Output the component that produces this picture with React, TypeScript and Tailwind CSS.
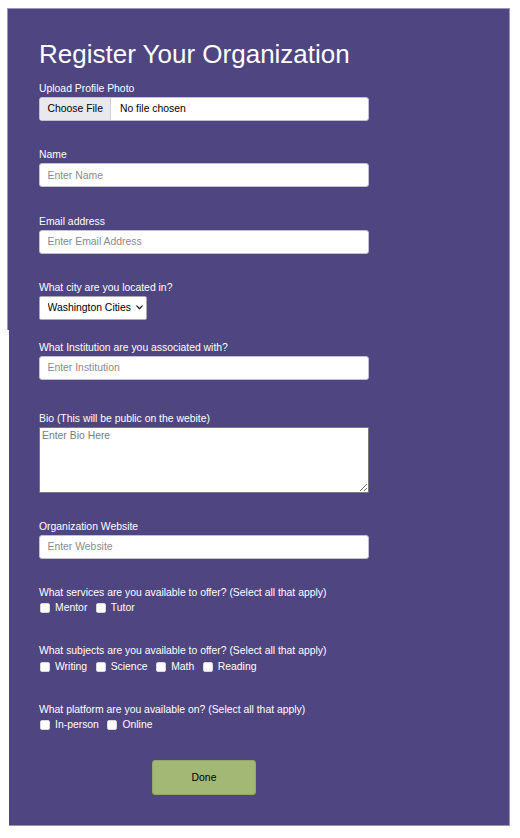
import React from "react";

function Label({ children }: { children: React.ReactNode }) {
  return (
    <div className="h-[12px] leading-[12px] text-[10.4px] text-white whitespace-nowrap">
      {children}
    </div>
  );
}

function TextInput({ placeholder }: { placeholder: string }) {
  return (
    <input
      type="text"
      placeholder={placeholder}
      className="mt-[2px] block w-[330px] h-[24px] bg-white border border-[#c3c1cf] rounded-[3px] pl-[7.5px] text-[10.4px] text-black placeholder:text-[#8a8a8e] outline-none"
    />
  );
}

function Check({ label }: { label: string }) {
  return (
    <label className="flex items-center mr-[7.5px] text-[10.4px] leading-[12px] text-white">
      <input
        type="checkbox"
        className="appearance-none ml-[1px] mr-[5px] w-[10px] h-[10px] bg-white rounded-[2px] border border-[#d8d8d8]"
      />
      {label}
    </label>
  );
}

export default function App() {
  return (
    <div className="min-h-[838px] bg-white pt-[8px] font-['Liberation_Sans',Arial,sans-serif]">
      {/* top section */}
      <div className="ml-[7px] w-[503px] bg-[#4f4580] border-l border-t border-r border-[#9a93c2] pl-[31px] pt-[30px] pb-[10px]">
        <h1 className="h-[30px] text-[26px] leading-[30px] font-normal text-white whitespace-nowrap">
          Register Your Organization
        </h1>

        <div className="mt-[13.5px]">
          <Label>Upload Profile Photo</Label>
          <div className="mt-[2px] flex w-[330px] h-[24px] bg-white border border-[#c3c1cf] rounded-[3px] overflow-hidden text-[10.4px] text-black">
            <div className="flex items-center h-full bg-[#e9e9ed] border-r border-[#cfcfd6] pl-[7.5px] pr-[7.5px]">
              Choose File
            </div>
            <div className="flex items-center pl-[8.5px]">No file chosen</div>
          </div>
        </div>

        <div className="mt-[28.5px]">
          <Label>Name</Label>
          <TextInput placeholder="Enter Name" />
        </div>

        <div className="mt-[28.5px]">
          <Label>Email address</Label>
          <TextInput placeholder="Enter Email Address" />
        </div>

        <div className="mt-[28.5px]">
          <Label>What city are you located in?</Label>
          <div className="relative mt-[2px] w-[108px] h-[24px]">
            <select className="appearance-none block w-[108px] h-[24px] bg-white border border-[#a9a9b3] rounded-[2px] pl-[7.5px] text-[10.4px] text-black outline-none">
              <option>Washington Cities</option>
            </select>
            <svg
              className="absolute right-[4px] top-[9px] pointer-events-none"
              width="7"
              height="5"
              viewBox="0 0 7 5"
              fill="none"
            >
              <path d="M0.8 0.9 L3.5 3.8 L6.2 0.9" stroke="#222" strokeWidth="1.3" strokeLinecap="round" strokeLinejoin="round" />
            </svg>
          </div>
        </div>
      </div>

      {/* lower section */}
      <div className="ml-[9px] w-[501px] bg-[#4f4580] border-r border-b border-[#9a93c2] pl-[30px] pt-[11.5px] pb-[30px]">
        <div>
          <Label>What Institution are you associated with?</Label>
          <TextInput placeholder="Enter Institution" />
        </div>

        <div className="mt-[33px]">
          <Label>Bio (This will be public on the webite)</Label>
          <textarea
            placeholder="Enter Bio Here"
            className="mt-[2px] block w-[330px] h-[66px] bg-white border border-[#7a7a7a] p-[2px] text-[10.4px] leading-[12px] text-black placeholder:text-[#7a7a7e] outline-none"
          />
        </div>

        <div className="mt-[28px]">
          <Label>Organization Website</Label>
          <TextInput placeholder="Enter Website" />
        </div>

        <div className="mt-[28px]">
          <Label>What services are you available to offer? (Select all that apply)</Label>
          <div className="mt-[3px] h-[13px] flex items-center">
            <Check label="Mentor" />
            <Check label="Tutor" />
          </div>
        </div>

        <div className="mt-[30.5px]">
          <Label>What subjects are you available to offer? (Select all that apply)</Label>
          <div className="mt-[3px] h-[13px] flex items-center">
            <Check label="Writing" />
            <Check label="Science" />
            <Check label="Math" />
            <Check label="Reading" />
          </div>
        </div>

        <div className="mt-[30.5px]">
          <Label>What platform are you available on? (Select all that apply)</Label>
          <div className="mt-[3px] h-[13px] flex items-center">
            <Check label="In-person" />
            <Check label="Online" />
          </div>
        </div>

        <button
          type="button"
          className="mt-[28.5px] ml-[113px] block w-[104px] h-[35px] bg-[#a3b874] rounded-[3px] border border-[#93a866] text-[10.4px] text-black"
        >
          Done
        </button>
      </div>
    </div>
  );
}
